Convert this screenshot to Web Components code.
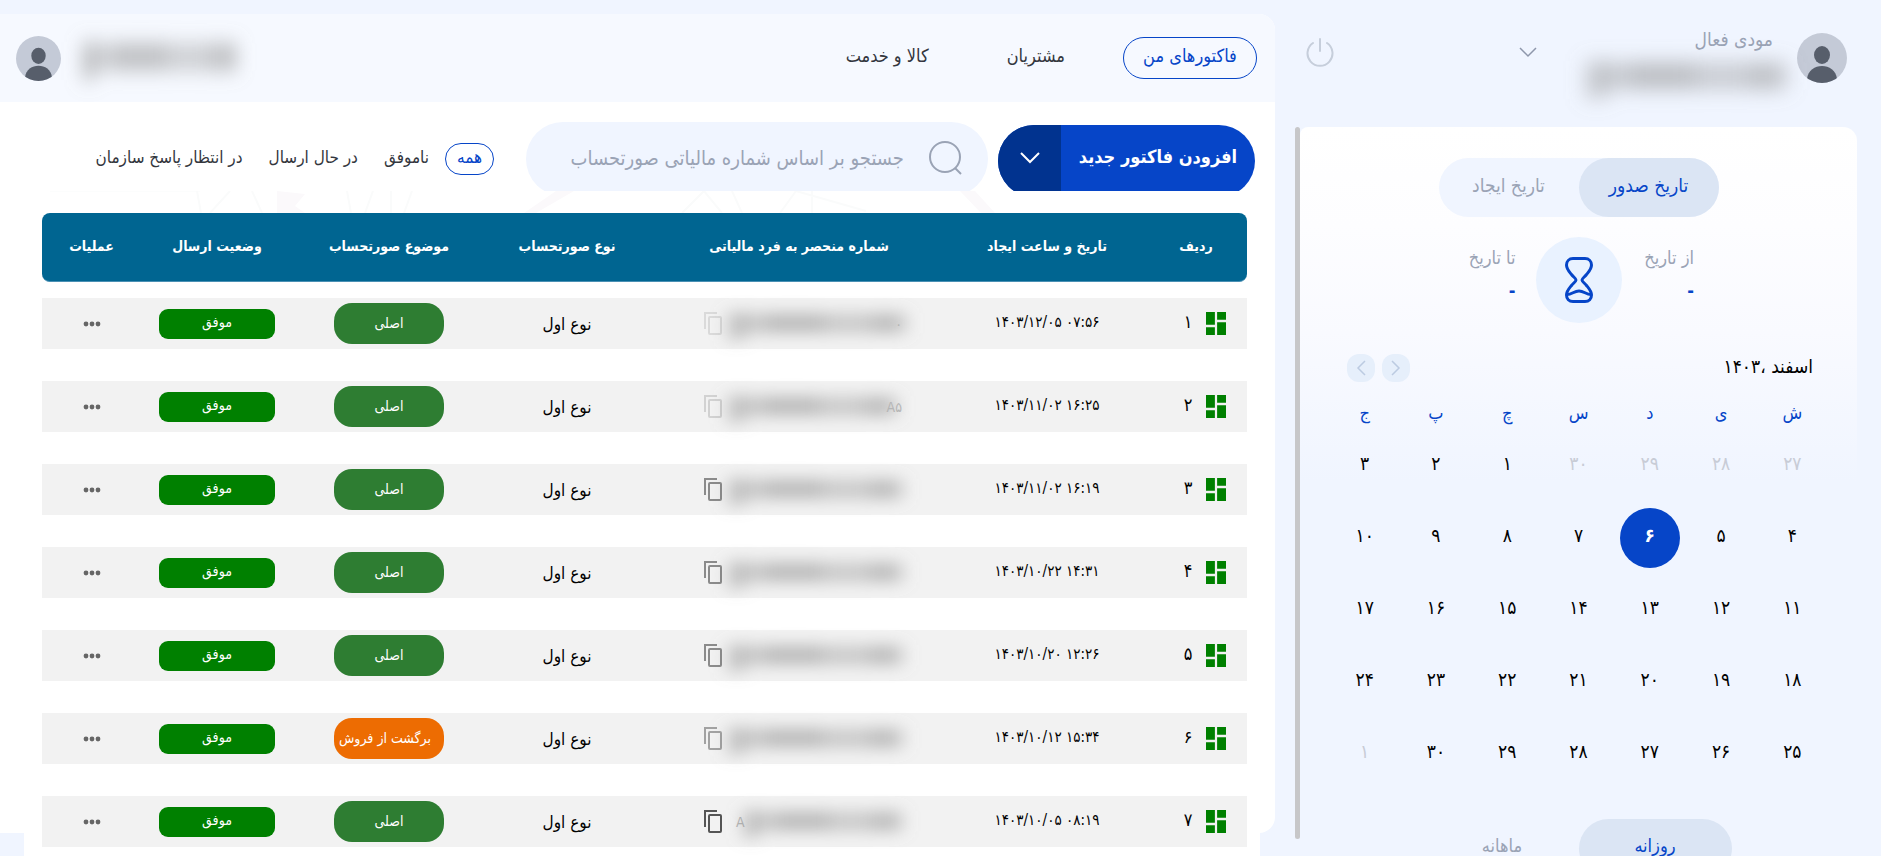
<!DOCTYPE html>
<html lang="fa" dir="rtl">
<head>
<meta charset="utf-8">
<title>فاکتورهای من</title>
<style>
html,body{margin:0;height:100%}
body{font-family:"DejaVu Sans Condensed","DejaVu Sans",sans-serif;background:#f0f5ff;color:#000;overflow:hidden;
--blue:#0645c8;--navy:#01338f;--muted:#9aa3b5;--ink:#33363d;--page:#f0f5ff;--tint:#dbe5f4;--soft:#e9f2ff}
</style>
</head>
<body>
<app-shell>
  <side-panel slot="side"></side-panel>
  <top-nav slot="nav"></top-nav>
  <invoice-toolbar slot="tools"></invoice-toolbar>
  <invoice-table></invoice-table>
</app-shell>
<script>
const RESET = `:host,*{box-sizing:border-box}button,input{font:inherit;color:inherit;background:none;border:0;padding:0;margin:0}a{color:inherit;text-decoration:none}svg{display:block}`;
const make = (name, html) => customElements.define(name, class extends HTMLElement {
  constructor(){
    super();
    const t = document.createElement('template');
    t.innerHTML = html;
    this.attachShadow({mode:'open'}).append(t.content.cloneNode(true));
  }
});
const fa = n => String(n).replace(/\d/g, d => '۰۱۲۳۴۵۶۷۸۹'[d]);

make('app-shell', `<style>${RESET}
:host{display:grid;grid-template-columns:minmax(0,606fr) minmax(0,1275fr);height:100vh}
main{padding-top:14px;min-width:0}
.card{background:#fff;border-radius:0 16px 16px 0;height:calc(100vh - 37px)}
.body{margin:0 15px 0 24px;padding-bottom:32px;background:#fff}
</style>
<slot name="side"></slot>
<main><div class="card"><slot name="nav"></slot><slot name="tools"></slot><div class="body"><slot></slot></div></div></main>`);

make('user-avatar', `<style>${RESET}
:host{display:block;width:45px;height:45px;flex:none}svg{width:100%;height:100%}</style>
<svg viewBox="0 0 50 50"><defs><clipPath id="c"><circle cx="25" cy="25" r="25"/></clipPath></defs>
<circle cx="25" cy="25" r="25" fill="#c4cad7"/><g clip-path="url(#c)" fill="#575e6b"><ellipse cx="25" cy="22" rx="8" ry="9"/><path d="M10 46C11 37 18 33 25 33s14 4 15 13l-5 5H15z"/></g></svg>`);

make('blurred-text', `<style>${RESET}
:host{display:block;width:150px;height:32px}
svg{width:100%;height:100%;overflow:visible}</style>
<svg viewBox="0 0 200 32" preserveAspectRatio="none"><defs><filter id="b" x="-30%" y="-200%" width="160%" height="500%"><feGaussianBlur stdDeviation="11 10"/></filter></defs>
<g filter="url(#b)" fill="#8d8d8d"><rect x="0" y="0" width="20" height="38" opacity=".45"/><rect x="14" y="1" width="194" height="28" opacity=".38"/><rect x="44" y="2" width="70" height="24" opacity=".25"/><rect x="170" y="2" width="40" height="26" opacity=".2"/></g></svg>`);

make('top-nav', `<style>${RESET}
:host{display:flex;align-items:center;height:88px;background:#f6f9ff;border-radius:0 16px 0 0;padding:0 18px 0 16px;color:var(--ink);font-size:18px}
nav{display:flex;align-items:center;gap:58px;margin-bottom:1px}
a{line-height:24px;padding-bottom:4px}
a:last-child{margin-right:20px}
a.on{width:134px;height:42px;line-height:36px;border:1px solid var(--blue);border-radius:21px;text-align:center;color:var(--blue)}
.me{margin-right:auto;display:flex;align-items:center;gap:20px}
</style>
<nav><a class="on" href="#invoices">فاکتورهای من</a><a href="#customers">مشتریان</a><a href="#goods">کالا و خدمت</a></nav>
<div class="me"><blurred-text></blurred-text><user-avatar></user-avatar></div>`);

make('invoice-toolbar', `<style>${RESET}
:host{display:flex;height:89px;overflow:hidden;padding:20px 20px 0 0;color:var(--ink);font-size:17px}
.add{display:flex;width:257px;height:72px;margin-top:3px;border-radius:36px;overflow:hidden;background:var(--blue);color:#fff;flex:none}
.add .t{flex:1;font-size:18px;font-weight:bold;padding-bottom:10px}
.add .d{width:63px;background:var(--navy);display:grid;place-items:center;padding-bottom:6px}
label{display:flex;align-items:center;height:74px;border-radius:37px;background:var(--page);margin-right:10px;width:462px;padding:0 26px 2px 24px;flex:0 1 auto;color:var(--muted)}
input{flex:1;min-width:0;margin-right:24px;font-size:20px;outline:0;height:40px}
input::placeholder{color:var(--muted);opacity:1}
.f{display:flex;margin:21px 32px 0 0;gap:26px;height:32px;align-items:center;white-space:nowrap}
.f button{line-height:24px;padding-bottom:4px}
.f .on{width:49px;height:32px;border:1px solid var(--blue);border-radius:16px;color:var(--blue);margin-left:-10px}
</style>
<div class="add"><button class="t">افزودن فاکتور جدید</button><button class="d" aria-label="گزینه‌ها"><svg width="22" height="14" fill="none" stroke="#fff" stroke-width="2"><path d="M2 2l9 9 9-9"/></svg></button></div>
<label><svg width="34" height="34" viewBox="0 0 34 34" fill="none" stroke="currentColor" stroke-width="2"><circle cx="17" cy="16" r="15"/><path d="M27 27l6 6"/></svg><input type="search" aria-label="جستجو" placeholder="جستجو بر اساس شماره مالیاتی صورتحساب"></label>
<div class="f"><button class="on">همه</button><button>ناموفق</button><button>در حال ارسال</button><button>در انتظار پاسخ سازمان</button></div>`);

// date, returned sale?, copy icon opacity, text after the number, text before it
const rows = [
 ['1403/12/05 07:56',0,'.15','۰',''],['1403/11/02 16:25',0,'.2','A۵',''],['1403/11/02 16:19',0,'.65','',''],
 ['1403/10/22 14:31',0,'.65','',''],['1403/10/20 12:26',0,'.65','',''],['1403/10/12 15:34',1,'.5','',''],['1403/10/05 08:19',0,'1','','A']];

make('invoice-table', `<style>${RESET}
:host{display:block;padding:0 13px 0 18px;font-size:14px}
.mark{width:100%;height:22px}
table{display:block}thead,tbody{display:grid}
tbody{margin-top:16px;gap:32px}
tr{display:grid;grid-template-columns:102fr 196fr 300fr 164fr 192fr 152fr 99fr;align-items:center;justify-items:center}
thead tr{background:#006591;border-radius:8px;height:69px;color:#fff;border-bottom:1px solid #4a90b4}
th{font-size:14px;line-height:24px;font-weight:bold;padding-bottom:4px;white-space:nowrap}
tbody tr{background:#f2f2f2;height:51px}
td{padding:0;line-height:24px}
td button{display:block}
.n{display:grid;grid-template-columns:20px 24px;gap:6px;align-items:center;justify-items:center;width:60px}
.n span{padding-bottom:4px;font-size:18px}
.date{direction:ltr;font-size:15px;padding-bottom:4px;white-space:nowrap}
.id{direction:ltr;display:flex;align-items:center;width:190px;gap:6px;font-size:14px;color:#b5b5b5}
.id svg{flex:none}
.id span{margin:0 -8px}
.id .pre{margin:0 -8px 0 8px}
.id blurred-text{height:24px;flex:1}
.type{font-size:17px}
</style>
<svg class="mark" viewBox="0 0 1205 22" preserveAspectRatio="none" fill="none" stroke="#fafbfb" stroke-width="2"><path d="M8 0h150" stroke-width="1"/><path d="M155 0l4 22M188 0l-20 22M210 0l10 22M305 0l4 22M331 0l-8 22M349 0v22M370 0l-8 22M640 22l22-22 18 22M690 0l10 22M738 22l16-22 70 20M770 0v22"/><path d="M235 0l28 3-10 12 10 7h-28zM482 22l32-22h18l-38 22zM918 0h15l20 22h-14z" fill="#fbf9fb" stroke="none"/></svg>
<table><thead><tr><th>ردیف</th><th>تاریخ و ساعت ایجاد</th><th>شماره منحصر به فرد مالیاتی</th><th>نوع صورتحساب</th><th>موضوع صورتحساب</th><th>وضعیت ارسال</th><th>عملیات</th></tr></thead>
<tbody>${rows.map((r,i)=>`<tr>
<td><div class="n"><svg width="20" height="23" viewBox="3 3 18 18" preserveAspectRatio="none" fill="#008000"><path d="M3 13h8V3H3v10zm0 8h8v-6H3v6zm10 0h8V11h-8v10zm0-18v6h8V3h-8z"/></svg><span>${fa(i+1)}</span></div></td>
<td class="date">${fa(r[0])}</td>
<td><div class="id"><svg width="18" height="23" viewBox="0 0 18 23" fill="none" stroke="#555" stroke-width="2" opacity="${r[2]}"><path d="M1 17V1h12"/><rect x="5" y="5" width="12" height="17" rx="1"/></svg>${r[4]?`<span class="pre">${r[4]}</span>`:''}<blurred-text></blurred-text>${r[3]?`<span>${r[3]}</span>`:''}</div></td>
<td class="type">نوع اول</td>
<td>${r[1]?'<status-chip kind="return">برگشت از فروش</status-chip>':'<status-chip kind="main">اصلی</status-chip>'}</td>
<td><status-chip kind="ok">موفق</status-chip></td>
<td><button aria-label="عملیات"><svg width="18" height="6" fill="#666"><circle cx="3" cy="3" r="2.4"/><circle cx="9" cy="3" r="2.4"/><circle cx="15" cy="3" r="2.4"/></svg></button></td></tr>`).join('')}</tbody></table>`);

make('status-chip', `<style>${RESET}
:host{display:grid;place-items:center;width:110px;height:41px;border-radius:18px;background:#2e7d32;color:#fff;font-size:14px;line-height:20px;padding-bottom:2px;white-space:nowrap}
:host([kind=return]){background:#ed6c02;padding-right:8px}
:host([kind=ok]){background:#008000;width:116px;height:30px;border-radius:9px;padding-bottom:4px}
</style><slot></slot>`);

make('side-panel', `<style>${RESET}
:host{display:flex;flex-direction:column;min-width:0;height:100vh}
header{display:flex;height:127px;flex:none;padding:33px 34px 0 31px;color:var(--muted)}
user-avatar{width:50px;height:50px}
.who{margin-right:24px;font-size:19px;line-height:24px;margin-top:-6px;width:190px}
.who blurred-text{margin:10px -4px 0 0;width:190px}
.drop{margin:13px 46px 0 0;height:12px}
.off{margin:4px auto 0 0;height:30px;color:#c6cedb}
.wrap{display:flex;flex:1;min-height:0;padding:0 24px 0 20px}
.bar{width:5px;height:712px;max-height:calc(100vh - 144px);background:#c7c7c9;border-radius:3px}
.card{flex:1;min-width:0;height:max-content;background:linear-gradient(#fff 0,#fdfdff 100px,#f9faff 205px,#f0f5ff 355px);border-radius:8px 14px 0 0;padding-top:31px}
.range{display:grid;grid-template-columns:1fr 86px 1fr;justify-content:center;margin-top:20px;height:86px}
.range div{font-size:18px;line-height:24px;color:var(--muted);padding-top:9px;display:flex;flex-direction:column;gap:9px}
.range div b{color:var(--blue)}
.from{padding-right:163px}.to{padding-right:20px}
.range i{display:grid;place-items:center;border-radius:50%;background:var(--soft)}
switch-pair{margin:0 auto;font-size:19px}
month-calendar{margin-top:25px}
.late{margin-top:29px;--half:153px;font-size:18px}
</style>
<header><user-avatar></user-avatar><div class="who">مودی فعال<blurred-text></blurred-text></div>
<button class="drop" aria-label="انتخاب مودی"><svg width="18" height="12" fill="none" stroke="#8e97ab" stroke-width="1.5"><path d="M1 2l8 8 8-8"/></svg></button>
<button class="off" aria-label="خروج"><svg width="28" height="30" viewBox="0 0 28 30" fill="none" stroke="currentColor" stroke-width="2" stroke-linecap="round"><path d="M14 2v12M7 6a12.5 12.5 0 1 0 14 0"/></svg></button></header>
<div class="wrap"><div class="card">
<switch-pair><span slot="a">تاریخ صدور</span><span slot="b">تاریخ ایجاد</span></switch-pair>
<div class="range"><div class="from">از تاریخ<b>-</b></div><i><svg width="28" height="46" viewBox="0 0 28 46" fill="none" stroke="#0645c8" stroke-width="3" stroke-linejoin="round"><path d="M8 1.5h12c4 0 6.5 3 6.5 6.5 0 4-2.5 6.500-5 9.500-2 2.500-4.500 4-4.500 5.500s2.500 3 4.500 5.500c2.500 3 5 5.500 5 9.500 0 4-2.500 6.500-6.500 6.500H8c-4 0-6.500-2.500-6.500-6.500 0-4 2.500-6.500 5-9.500 2-2.500 4.500-4 4.500-5.500s-2.500-3-4.500-5.500c-2.500-3-5-5.500-5-9.500 0-3.500 2.500-6.500 6.500-6.500z"/><path d="M2 37.500c5 0 7-3.500 12-3.500s7 3.500 12 3.500"/></svg></i><div class="to">تا تاریخ<b>-</b></div></div>
<month-calendar></month-calendar>
<switch-pair class="late"><span slot="a">روزانه</span><span slot="b">ماهانه</span></switch-pair>
</div><div class="bar"></div></div>`);

make('switch-pair', `<style>${RESET}
:host{display:flex;width:calc(var(--half,140px)*2);height:59px;border-radius:30px;background:var(--page);color:var(--muted)}
button{flex:1;border-radius:30px;padding-bottom:6px}
.on{background:var(--tint);color:var(--blue)}
</style><button class="on"><slot name="a"></slot></button><button><slot name="b"></slot></button>`);

const days = [27,28,29,30,...Array.from({length:30},(_,i)=>i+1),1];
make('month-calendar', `<style>${RESET}
:host{display:block;padding:0 29px}
.top{display:flex;align-items:center;height:40px;padding:0 15px 0 18px;font-size:19px}
.top span{flex:1;padding-bottom:4px}
.top button{width:28px;height:28px;border-radius:12px;background:#e6effb;display:grid;place-items:center;margin-right:7px}
table{width:100%;table-layout:fixed;border-collapse:collapse;text-align:center;font-size:19px}
th{height:42px;padding:6px 0 0;color:var(--blue);font-size:18px;font-weight:normal}
td{height:72px;padding:0}
td button{display:block;width:60px;height:60px;margin:0 auto;border-radius:50%;line-height:24px;padding-bottom:6px}
.out{color:#c8ccd6}.on{background:var(--blue);color:#fff;font-weight:bold}
</style>
<div class="top"><span>اسفند ،۱۴۰۳</span><button aria-label="ماه قبل"><svg width="10" height="16" fill="none" stroke="#bccbe2" stroke-width="1.5"><path d="M1 1l7 7-7 7"/></svg></button><button aria-label="ماه بعد"><svg width="10" height="16" fill="none" stroke="#bccbe2" stroke-width="1.5"><path d="M9 1L2 8l7 7"/></svg></button></div>
<table><thead><tr>${[...'شیدسچپج'].map(d=>`<th>${d}</th>`).join('')}</tr></thead><tbody>${[0,1,2,3,4].map(w=>`<tr>${days.slice(w*7,w*7+7).map((d,i)=>{const k=w*7+i;return `<td><button class="${k<4||k>33?'out':k===9?'on':''}">${fa(d)}</button></td>`}).join('')}</tr>`).join('')}</tbody></table>`);
</script>
</body>
</html>
